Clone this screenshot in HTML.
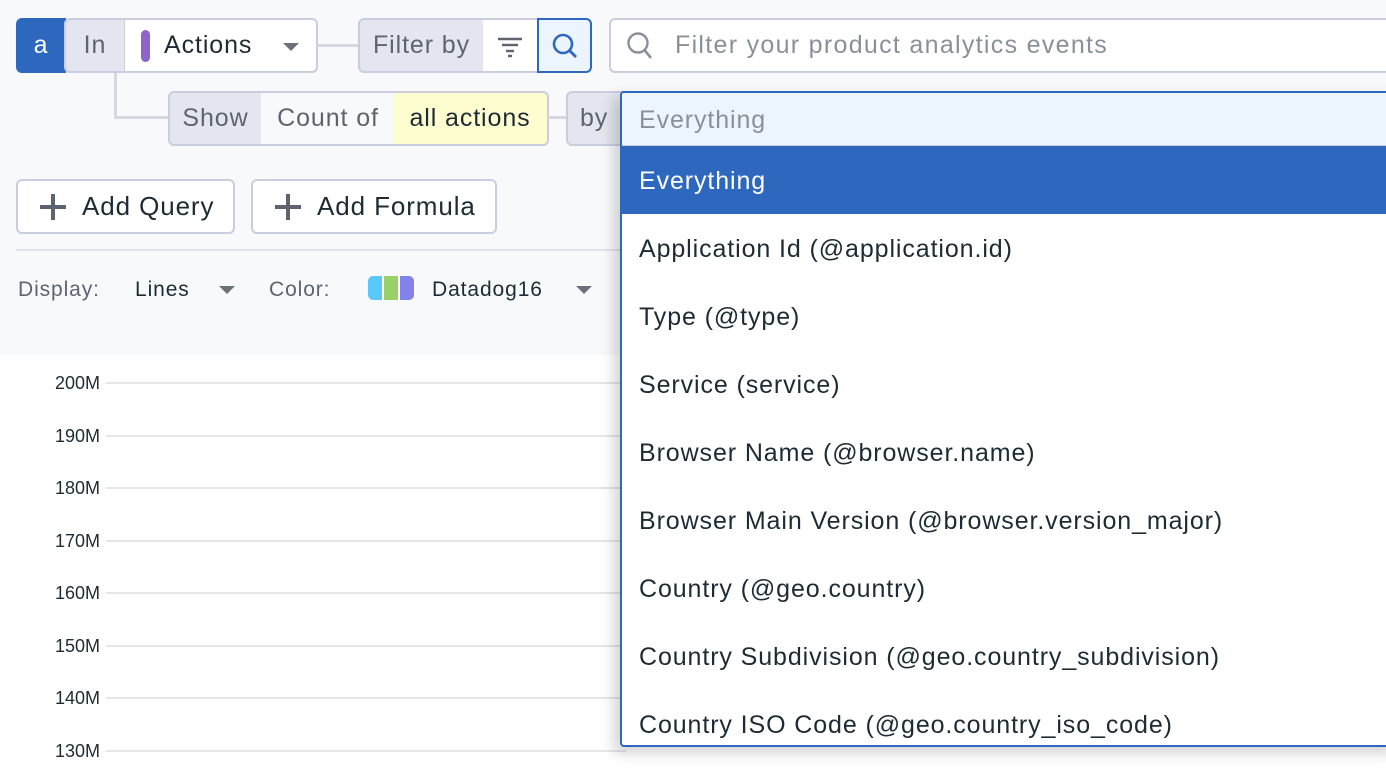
<!DOCTYPE html>
<html><head><meta charset="utf-8"><style>
*{box-sizing:border-box;margin:0;padding:0}
body{width:1386px;height:772px;overflow:hidden;background:#fff;font-family:"Liberation Sans",sans-serif;color:#1c2b34;position:relative;letter-spacing:0.9px}
.top{position:absolute;left:0;top:0;width:1386px;height:355px;background:#f8f9fb}
.abs{position:absolute}
.seg{position:absolute;display:flex;align-items:center;font-size:25px;border:2px solid #c9cddf}
.gray{background:#e3e6ee;color:#5d6470}
.line{position:absolute;background:#d5d8e2}
.btn{position:absolute;height:55px;border:2px solid #c9cddf;border-radius:6px;background:#fff;display:flex;align-items:center;font-size:26px}
.plus{width:26px;height:26px;position:relative;margin:0 16px 0 22px}
.plus:before,.plus:after{content:"";position:absolute;background:#5d6470}
.plus:before{left:11px;top:0;width:4px;height:26px}
.plus:after{top:11px;left:0;height:4px;width:26px}
.tri{width:0;height:0;border-left:8px solid transparent;border-right:8px solid transparent;border-top:8px solid #6b717b;position:absolute}
.ylab{position:absolute;left:0;width:100px;text-align:right;font-size:18px;color:#1c2b34;letter-spacing:0}
.grid{position:absolute;left:106px;width:520px;height:2px;background:#e6e6e8}
.dd{position:absolute;left:620px;top:91px;width:780px;height:656px;border:2px solid #2d68be;border-radius:4px;background:#fff;box-shadow:-6px 6px 14px rgba(0,0,0,.18);overflow:hidden}
.item{height:68px;line-height:70px;padding-left:17px;font-size:25px;color:#1c2b34}
</style></head><body>
<div class="top"></div>

<div class="abs" style="left:16px;top:18px;width:50px;height:55px;background:#2d68be;border-radius:6px 0 0 6px;color:#fff;font-size:25px;text-align:center;line-height:55px">a</div>
<div class="seg gray" style="left:64px;top:18px;width:62px;height:55px;border-radius:6px 0 0 6px;justify-content:center">In</div>
<div class="seg" style="left:124px;top:18px;width:194px;height:55px;background:#fff;border-radius:0 6px 6px 0;border-left:1px solid #c9cddf">
 <span style="width:9px;height:32px;background:#8f64c8;border-radius:5px;margin-left:16px"></span>
 <span style="margin-left:14px">Actions</span>
 <span class="tri" style="left:158px;top:23px"></span>
</div>
<div class="line" style="left:317px;top:44px;width:43px;height:3px"></div>
<div class="seg gray" style="left:358px;top:18px;width:127px;height:55px;border-radius:6px 0 0 6px;justify-content:center">Filter by</div>
<div class="seg" style="left:483px;top:18px;width:56px;height:55px;background:#fff;border-left:none;justify-content:center">
 <svg width="26" height="24" viewBox="0 0 26 24"><g stroke="#5d6470" stroke-width="2.4"><line x1="1" y1="5" x2="25" y2="5"/><line x1="5" y1="11" x2="21" y2="11"/><line x1="9" y1="17" x2="17" y2="17"/><line x1="11" y1="22" x2="15" y2="22"/></g></svg>
</div>
<div class="seg" style="left:537px;top:18px;width:55px;height:55px;background:#ecf4fd;border-color:#2d68be;border-radius:0 6px 6px 0;justify-content:center">
 <svg width="28" height="28" viewBox="0 0 28 28"><circle cx="12" cy="12" r="9" fill="none" stroke="#2d68be" stroke-width="2.6"/><line x1="18.5" y1="18.5" x2="25" y2="25" stroke="#2d68be" stroke-width="2.8"/></svg>
</div>
<div class="seg" style="left:609px;top:18px;width:800px;height:55px;background:#fff;border-radius:6px;color:#8a9099">
 <svg style="margin-left:14px" width="30" height="30" viewBox="0 0 30 30"><circle cx="13" cy="12" r="9.5" fill="none" stroke="#8a9099" stroke-width="2.4"/><line x1="19.5" y1="19" x2="26" y2="27" stroke="#8a9099" stroke-width="2.6"/></svg>
 <span style="margin-left:20px;letter-spacing:1.3px">Filter your product analytics events</span>
</div>

<div class="line" style="left:114px;top:73px;width:3px;height:46px"></div>
<div class="line" style="left:114px;top:116px;width:56px;height:3px"></div>
<div class="seg gray" style="left:168px;top:91px;width:95px;height:55px;border-radius:6px 0 0 6px;justify-content:center">Show</div>
<div class="seg" style="left:261px;top:91px;width:134px;height:55px;background:#f8f9fb;border-left:none;border-right:none;color:#5d6470;justify-content:center">Count of</div>
<div class="seg" style="left:393px;top:91px;width:156px;height:55px;background:#fefdd0;border-left:none;border-radius:0 6px 6px 0;justify-content:center">all actions</div>
<div class="line" style="left:548px;top:116px;width:20px;height:3px"></div>
<div class="seg gray" style="left:566px;top:91px;width:70px;height:55px;border-radius:6px 0 0 6px;padding-left:12px">by</div>

<div class="btn" style="left:16px;top:179px;width:219px"><span class="plus"></span>Add Query</div>
<div class="btn" style="left:251px;top:179px;width:246px"><span class="plus"></span>Add Formula</div>
<div class="line" style="left:16px;top:249px;width:610px;height:2px;background:#e1e3ea"></div>

<div class="abs" style="left:18px;top:278px;font-size:21px;color:#5d6470">Display:</div>
<div class="abs" style="left:135px;top:278px;font-size:21px">Lines</div>
<span class="tri" style="left:219px;top:286px"></span>
<div class="abs" style="left:269px;top:278px;font-size:21px;color:#5d6470">Color:</div>
<div class="abs" style="left:368px;top:276px;width:46px;height:24px;border-radius:5px;overflow:hidden;display:flex">
 <span style="width:14px;background:#5ac8fa"></span><span style="width:2px;background:#fff"></span><span style="width:14px;background:#99d067"></span><span style="width:2px;background:#fff"></span><span style="width:14px;background:#8481ea"></span>
</div>
<div class="abs" style="left:432px;top:278px;font-size:21px">Datadog16</div>
<span class="tri" style="left:576px;top:286px"></span>

<div class="ylab" style="top:373px">200M</div><div class="grid" style="top:382px"></div>
<div class="ylab" style="top:426px">190M</div><div class="grid" style="top:435px"></div>
<div class="ylab" style="top:478px">180M</div><div class="grid" style="top:487px"></div>
<div class="ylab" style="top:531px">170M</div><div class="grid" style="top:540px"></div>
<div class="ylab" style="top:583px">160M</div><div class="grid" style="top:592px"></div>
<div class="ylab" style="top:636px">150M</div><div class="grid" style="top:645px"></div>
<div class="ylab" style="top:688px">140M</div><div class="grid" style="top:697px"></div>
<div class="ylab" style="top:741px">130M</div><div class="grid" style="top:750px"></div>

<div class="dd">
 <div style="height:53px;line-height:55px;background:#ecf4fd;border-bottom:1px solid #c9cddf;padding-left:17px;font-size:25px;color:#8a9099">Everything</div>
 <div class="item" style="background:#2d68be;color:#fff">Everything</div>
 <div class="item">Application Id (@application.id)</div>
 <div class="item">Type (@type)</div>
 <div class="item">Service (service)</div>
 <div class="item">Browser Name (@browser.name)</div>
 <div class="item">Browser Main Version (@browser.version_major)</div>
 <div class="item">Country (@geo.country)</div>
 <div class="item">Country Subdivision (@geo.country_subdivision)</div>
 <div class="item">Country ISO Code (@geo.country_iso_code)</div>
</div>
</body></html>
